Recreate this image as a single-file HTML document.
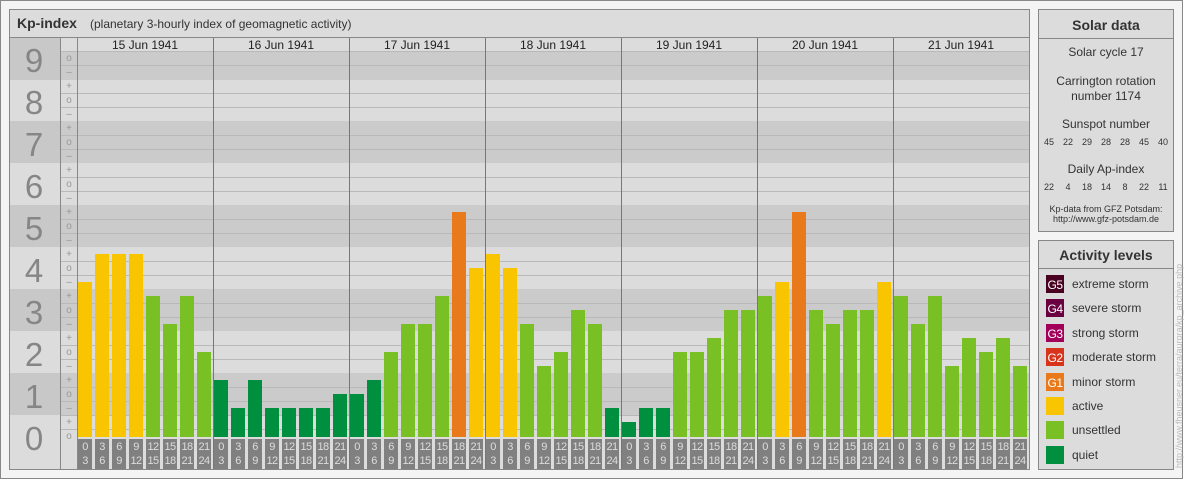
<!DOCTYPE html>
<html><head><meta charset="utf-8"><style>
html,body{margin:0;padding:0;background:#fff;}
svg{display:block;font-family:"Liberation Sans",sans-serif;}
</style></head><body>
<svg width="1184" height="480" viewBox="0 0 1184 480" xmlns="http://www.w3.org/2000/svg">
<rect x="0.5" y="0.5" width="1182" height="478" fill="#f4f4f4" stroke="#888"/>
<rect x="9.5" y="9.5" width="1020" height="460" fill="#dcdcdc" stroke="#888"/>
<line x1="9" y1="37.5" x2="1030" y2="37.5" stroke="#888"/>
<text x="17" y="28" font-size="14" font-weight="bold" fill="#333">Kp-index</text>
<text x="90" y="28" font-size="12" fill="#333">(planetary 3-hourly index of geomagnetic activity)</text>
<g fill="#c8c8c8">
<rect x="10" y="38" width="50" height="42"/>
<rect x="10" y="121" width="50" height="42"/>
<rect x="10" y="205" width="50" height="42"/>
<rect x="10" y="289" width="50" height="42"/>
<rect x="10" y="373" width="50" height="42"/>
</g>
<g fill="#cbcbcb">
<rect x="60" y="51" width="969" height="29"/>
<rect x="60" y="121" width="969" height="42"/>
<rect x="60" y="205" width="969" height="42"/>
<rect x="60" y="289" width="969" height="42"/>
<rect x="60" y="373" width="969" height="42"/>
</g>
<g stroke="#b9b9b9" stroke-width="1">
<path d="M60 429.5H1029M60 415.5H1029M60 401.5H1029M60 387.5H1029M60 359.5H1029M60 345.5H1029M60 317.5H1029M60 303.5H1029M60 275.5H1029M60 261.5H1029M60 233.5H1029M60 219.5H1029M60 191.5H1029M60 177.5H1029M60 149.5H1029M60 135.5H1029M60 107.5H1029M60 93.5H1029M60 65.5H1029M60 51.5H1029"/>
</g>
<line x1="60.5" y1="38" x2="60.5" y2="469" stroke="#888"/>
<line x1="77.5" y1="38" x2="77.5" y2="469" stroke="#888"/>
<g stroke="#777"><path d="M213.5 38V469M349.5 38V469M485.5 38V469M621.5 38V469M757.5 38V469M893.5 38V469"/></g>
<g font-size="33" fill="#868686" text-anchor="middle">
<text x="34" y="72">9</text><text x="34" y="114">8</text><text x="34" y="156">7</text><text x="34" y="198">6</text><text x="34" y="240">5</text><text x="34" y="282">4</text><text x="34" y="324">3</text><text x="34" y="366">2</text><text x="34" y="408">1</text><text x="34" y="450">0</text>
</g>
<g font-size="10" fill="#999" text-anchor="middle">
<text x="69" y="61">o</text><text x="69" y="75">–</text>
<text x="69" y="89">+</text><text x="69" y="103">o</text><text x="69" y="117">–</text>
<text x="69" y="131">+</text><text x="69" y="145">o</text><text x="69" y="159">–</text>
<text x="69" y="173">+</text><text x="69" y="187">o</text><text x="69" y="201">–</text>
<text x="69" y="215">+</text><text x="69" y="229">o</text><text x="69" y="243">–</text>
<text x="69" y="257">+</text><text x="69" y="271">o</text><text x="69" y="285">–</text>
<text x="69" y="299">+</text><text x="69" y="313">o</text><text x="69" y="327">–</text>
<text x="69" y="341">+</text><text x="69" y="355">o</text><text x="69" y="369">–</text>
<text x="69" y="383">+</text><text x="69" y="397">o</text><text x="69" y="411">–</text>
<text x="69" y="425">+</text><text x="69" y="439">o</text>
</g>
<g font-size="12" fill="#222" text-anchor="middle">
<text x="145" y="49">15 Jun 1941</text><text x="281" y="49">16 Jun 1941</text><text x="417" y="49">17 Jun 1941</text><text x="553" y="49">18 Jun 1941</text><text x="689" y="49">19 Jun 1941</text><text x="825" y="49">20 Jun 1941</text><text x="961" y="49">21 Jun 1941</text>
</g>
<g>
<rect x="78" y="282" width="14" height="155" fill="#f9c500"/>
<rect x="95" y="254" width="14" height="183" fill="#f9c500"/>
<rect x="112" y="254" width="14" height="183" fill="#f9c500"/>
<rect x="129" y="254" width="14" height="183" fill="#f9c500"/>
<rect x="146" y="296" width="14" height="141" fill="#79c024"/>
<rect x="163" y="324" width="14" height="113" fill="#79c024"/>
<rect x="180" y="296" width="14" height="141" fill="#79c024"/>
<rect x="197" y="352" width="14" height="85" fill="#79c024"/>
<rect x="214" y="380" width="14" height="57" fill="#008f3f"/>
<rect x="231" y="408" width="14" height="29" fill="#008f3f"/>
<rect x="248" y="380" width="14" height="57" fill="#008f3f"/>
<rect x="265" y="408" width="14" height="29" fill="#008f3f"/>
<rect x="282" y="408" width="14" height="29" fill="#008f3f"/>
<rect x="299" y="408" width="14" height="29" fill="#008f3f"/>
<rect x="316" y="408" width="14" height="29" fill="#008f3f"/>
<rect x="333" y="394" width="14" height="43" fill="#008f3f"/>
<rect x="350" y="394" width="14" height="43" fill="#008f3f"/>
<rect x="367" y="380" width="14" height="57" fill="#008f3f"/>
<rect x="384" y="352" width="14" height="85" fill="#79c024"/>
<rect x="401" y="324" width="14" height="113" fill="#79c024"/>
<rect x="418" y="324" width="14" height="113" fill="#79c024"/>
<rect x="435" y="296" width="14" height="141" fill="#79c024"/>
<rect x="452" y="212" width="14" height="225" fill="#e87a1c"/>
<rect x="469" y="268" width="14" height="169" fill="#f9c500"/>
<rect x="486" y="254" width="14" height="183" fill="#f9c500"/>
<rect x="503" y="268" width="14" height="169" fill="#f9c500"/>
<rect x="520" y="324" width="14" height="113" fill="#79c024"/>
<rect x="537" y="366" width="14" height="71" fill="#79c024"/>
<rect x="554" y="352" width="14" height="85" fill="#79c024"/>
<rect x="571" y="310" width="14" height="127" fill="#79c024"/>
<rect x="588" y="324" width="14" height="113" fill="#79c024"/>
<rect x="605" y="408" width="14" height="29" fill="#008f3f"/>
<rect x="622" y="422" width="14" height="15" fill="#008f3f"/>
<rect x="639" y="408" width="14" height="29" fill="#008f3f"/>
<rect x="656" y="408" width="14" height="29" fill="#008f3f"/>
<rect x="673" y="352" width="14" height="85" fill="#79c024"/>
<rect x="690" y="352" width="14" height="85" fill="#79c024"/>
<rect x="707" y="338" width="14" height="99" fill="#79c024"/>
<rect x="724" y="310" width="14" height="127" fill="#79c024"/>
<rect x="741" y="310" width="14" height="127" fill="#79c024"/>
<rect x="758" y="296" width="14" height="141" fill="#79c024"/>
<rect x="775" y="282" width="14" height="155" fill="#f9c500"/>
<rect x="792" y="212" width="14" height="225" fill="#e87a1c"/>
<rect x="809" y="310" width="14" height="127" fill="#79c024"/>
<rect x="826" y="324" width="14" height="113" fill="#79c024"/>
<rect x="843" y="310" width="14" height="127" fill="#79c024"/>
<rect x="860" y="310" width="14" height="127" fill="#79c024"/>
<rect x="877" y="282" width="14" height="155" fill="#f9c500"/>
<rect x="894" y="296" width="14" height="141" fill="#79c024"/>
<rect x="911" y="324" width="14" height="113" fill="#79c024"/>
<rect x="928" y="296" width="14" height="141" fill="#79c024"/>
<rect x="945" y="366" width="14" height="71" fill="#79c024"/>
<rect x="962" y="338" width="14" height="99" fill="#79c024"/>
<rect x="979" y="352" width="14" height="85" fill="#79c024"/>
<rect x="996" y="338" width="14" height="99" fill="#79c024"/>
<rect x="1013" y="366" width="14" height="71" fill="#79c024"/>
</g>
<defs>
<g id="tl">
<g fill="#808080">
<rect x="78" y="439" width="14" height="30"/><rect x="95" y="439" width="14" height="30"/><rect x="112" y="439" width="14" height="30"/><rect x="129" y="439" width="14" height="30"/><rect x="146" y="439" width="14" height="30"/><rect x="163" y="439" width="14" height="30"/><rect x="180" y="439" width="14" height="30"/><rect x="197" y="439" width="14" height="30"/>
</g>
</g>
</defs>
<use href="#tl"/><use href="#tl" x="136"/><use href="#tl" x="272"/><use href="#tl" x="408"/><use href="#tl" x="544"/><use href="#tl" x="680"/><use href="#tl" x="816"/>
<g font-size="11" fill="#ddd" text-anchor="middle" letter-spacing="-0.6">
<text x="85" y="450">0</text><text x="102" y="450">3</text><text x="119" y="450">6</text><text x="136" y="450">9</text><text x="153" y="450">12</text><text x="170" y="450">15</text><text x="187" y="450">18</text><text x="204" y="450">21</text>
<text x="85" y="464">3</text><text x="102" y="464">6</text><text x="119" y="464">9</text><text x="136" y="464">12</text><text x="153" y="464">15</text><text x="170" y="464">18</text><text x="187" y="464">21</text><text x="204" y="464">24</text>
<text x="221" y="450">0</text><text x="238" y="450">3</text><text x="255" y="450">6</text><text x="272" y="450">9</text><text x="289" y="450">12</text><text x="306" y="450">15</text><text x="323" y="450">18</text><text x="340" y="450">21</text>
<text x="221" y="464">3</text><text x="238" y="464">6</text><text x="255" y="464">9</text><text x="272" y="464">12</text><text x="289" y="464">15</text><text x="306" y="464">18</text><text x="323" y="464">21</text><text x="340" y="464">24</text>
<text x="357" y="450">0</text><text x="374" y="450">3</text><text x="391" y="450">6</text><text x="408" y="450">9</text><text x="425" y="450">12</text><text x="442" y="450">15</text><text x="459" y="450">18</text><text x="476" y="450">21</text>
<text x="357" y="464">3</text><text x="374" y="464">6</text><text x="391" y="464">9</text><text x="408" y="464">12</text><text x="425" y="464">15</text><text x="442" y="464">18</text><text x="459" y="464">21</text><text x="476" y="464">24</text>
<text x="493" y="450">0</text><text x="510" y="450">3</text><text x="527" y="450">6</text><text x="544" y="450">9</text><text x="561" y="450">12</text><text x="578" y="450">15</text><text x="595" y="450">18</text><text x="612" y="450">21</text>
<text x="493" y="464">3</text><text x="510" y="464">6</text><text x="527" y="464">9</text><text x="544" y="464">12</text><text x="561" y="464">15</text><text x="578" y="464">18</text><text x="595" y="464">21</text><text x="612" y="464">24</text>
<text x="629" y="450">0</text><text x="646" y="450">3</text><text x="663" y="450">6</text><text x="680" y="450">9</text><text x="697" y="450">12</text><text x="714" y="450">15</text><text x="731" y="450">18</text><text x="748" y="450">21</text>
<text x="629" y="464">3</text><text x="646" y="464">6</text><text x="663" y="464">9</text><text x="680" y="464">12</text><text x="697" y="464">15</text><text x="714" y="464">18</text><text x="731" y="464">21</text><text x="748" y="464">24</text>
<text x="765" y="450">0</text><text x="782" y="450">3</text><text x="799" y="450">6</text><text x="816" y="450">9</text><text x="833" y="450">12</text><text x="850" y="450">15</text><text x="867" y="450">18</text><text x="884" y="450">21</text>
<text x="765" y="464">3</text><text x="782" y="464">6</text><text x="799" y="464">9</text><text x="816" y="464">12</text><text x="833" y="464">15</text><text x="850" y="464">18</text><text x="867" y="464">21</text><text x="884" y="464">24</text>
<text x="901" y="450">0</text><text x="918" y="450">3</text><text x="935" y="450">6</text><text x="952" y="450">9</text><text x="969" y="450">12</text><text x="986" y="450">15</text><text x="1003" y="450">18</text><text x="1020" y="450">21</text>
<text x="901" y="464">3</text><text x="918" y="464">6</text><text x="935" y="464">9</text><text x="952" y="464">12</text><text x="969" y="464">15</text><text x="986" y="464">18</text><text x="1003" y="464">21</text><text x="1020" y="464">24</text>
</g>
<rect x="1038.5" y="9.5" width="135" height="222" fill="#dcdcdc" stroke="#888"/>
<line x1="1038" y1="38.5" x2="1174" y2="38.5" stroke="#888"/>
<g fill="#333" text-anchor="middle">
<text x="1106" y="30" font-size="14" font-weight="bold">Solar data</text>
<text x="1106" y="56" font-size="12">Solar cycle 17</text>
<text x="1106" y="85" font-size="12">Carrington rotation</text>
<text x="1106" y="100" font-size="12">number 1174</text>
<text x="1106" y="128" font-size="12">Sunspot number</text>
<g font-size="9"><text x="1049" y="145">45</text><text x="1068" y="145">22</text><text x="1087" y="145">29</text><text x="1106" y="145">28</text><text x="1125" y="145">28</text><text x="1144" y="145">45</text><text x="1163" y="145">40</text>
<text x="1049" y="190">22</text><text x="1068" y="190">4</text><text x="1087" y="190">18</text><text x="1106" y="190">14</text><text x="1125" y="190">8</text><text x="1144" y="190">22</text><text x="1163" y="190">11</text>
<text x="1106" y="212">Kp-data from GFZ Potsdam:</text><text x="1106" y="222">http://www.gfz-potsdam.de</text></g>
<text x="1106" y="173" font-size="12">Daily Ap-index</text>
</g>
<rect x="1038.5" y="240.5" width="135" height="229" fill="#dcdcdc" stroke="#888"/>
<line x1="1038" y1="268.5" x2="1174" y2="268.5" stroke="#888"/>
<text x="1106" y="260" font-size="14" font-weight="bold" fill="#333" text-anchor="middle">Activity levels</text>
<rect x="1046" y="275" width="18" height="18" fill="#4a0020"/>
<rect x="1046" y="299" width="18" height="18" fill="#6b0040"/>
<rect x="1046" y="324" width="18" height="18" fill="#a3005c"/>
<rect x="1046" y="348" width="18" height="18" fill="#d8341c"/>
<rect x="1046" y="373" width="18" height="18" fill="#e87a1c"/>
<rect x="1046" y="397" width="18" height="18" fill="#f9c500"/>
<rect x="1046" y="421" width="18" height="18" fill="#79c024"/>
<rect x="1046" y="446" width="18" height="18" fill="#008f3f"/>
<g font-size="12" fill="#fff" text-anchor="middle" letter-spacing="-0.5">
<text x="1055" y="289">G5</text><text x="1055" y="313">G4</text><text x="1055" y="338">G3</text><text x="1055" y="362">G2</text><text x="1055" y="387">G1</text>
</g>
<g font-size="12" fill="#333">
<text x="1072" y="288">extreme storm</text><text x="1072" y="312">severe storm</text><text x="1072" y="337">strong storm</text><text x="1072" y="361">moderate storm</text><text x="1072" y="386">minor storm</text><text x="1072" y="410">active</text><text x="1072" y="434">unsettled</text><text x="1072" y="459">quiet</text>
</g>
<text transform="translate(1182,468) rotate(-90)" font-size="9" fill="#bbb">http://www.fheusner.eu/terra/aurora/kp_archive.php</text>
</svg>
</body></html>
